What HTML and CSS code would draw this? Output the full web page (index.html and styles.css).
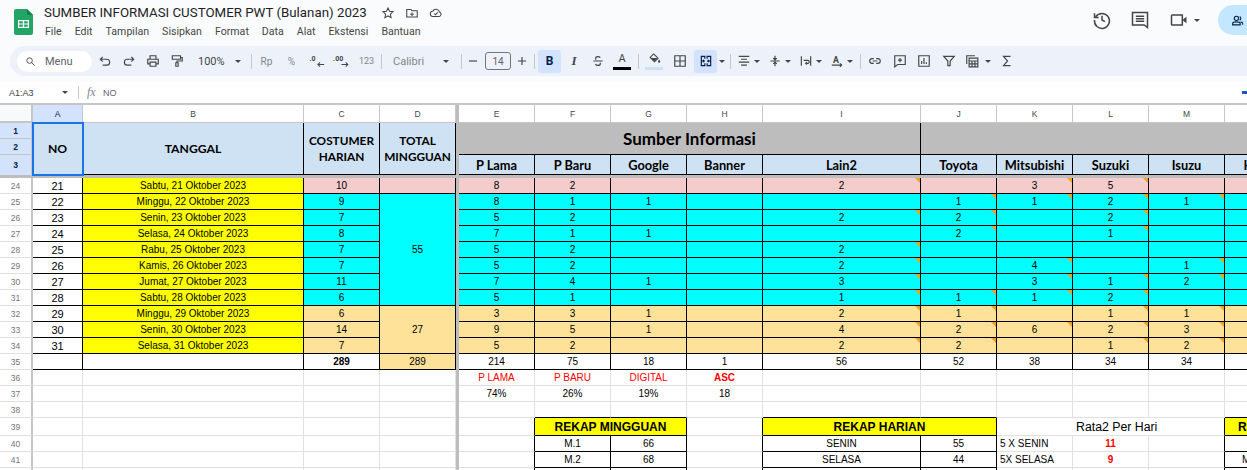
FILE: index.html
```html
<!DOCTYPE html>
<html lang="id">
<head>
<meta charset="utf-8">
<title>SUMBER INFORMASI CUSTOMER PWT (Bulanan) 2023</title>
<link rel="stylesheet" href="styles.css">
</head>
<body>
<header class="appbar">
  <svg class="logo" viewBox="0 0 19 26"><path fill="#23a566" d="M0 2a2 2 0 0 1 2-2h11l6 6v18a2 2 0 0 1-2 2H2a2 2 0 0 1-2-2z"/><path fill="#14804a" d="M13 0l6 6h-4a2 2 0 0 1-2-2z"/><path fill="#fff" d="M4 11h11v8H4z"/><path fill="#23a566" d="M5.200 12.200h3.700v2.200H5.200zM10.100 12.200h3.700v2.200h-3.700zM5.200 15.600h3.700v2.200H5.200zM10.100 15.600h3.700v2.200h-3.700z"/></svg>
  <div class="docinfo">
    <div class="titlerow">
      <span class="doctitle">SUMBER INFORMASI CUSTOMER PWT (Bulanan) 2023</span>
      <svg class="ic ti" viewBox="0 0 24 24"><path d="M12 3.500l2.600 5.600 6 .7-4.500 4.100 1.200 6L12 17l-5.300 3 1.200-6-4.500-4.200 6-.7z"/></svg>
      <svg class="ic ti" viewBox="0 0 24 24"><path d="M3 6h7l2 2h9v11H3zM12 11v6M9 14h6"/></svg>
      <svg class="ic ti" viewBox="0 0 24 24"><path d="M7 18a4.500 4.500 0 0 1-.5-9 6 6 0 0 1 11.300 1.200A4 4 0 0 1 17.500 18zM9 13l2 2 4-4"/></svg>
    </div>
    <nav class="menubar"><span>File</span><span>Edit</span><span>Tampilan</span><span>Sisipkan</span><span>Format</span><span>Data</span><span>Alat</span><span>Ekstensi</span><span>Bantuan</span></nav>
  </div>
  <div class="actions">
    <svg class="ic big" viewBox="0 0 24 24"><path d="M4.500 8A9 9 0 1 1 3 12M3 4v5h5M12 7v5l3.500 2"/></svg>
    <svg class="ic big" viewBox="0 0 24 24"><path d="M3 3h18v18l-4-3H3zM7 7.500h10M7 10.500h10M7 13.500h10"/></svg>
    <div class="meet">
      <svg class="ic big" viewBox="0 0 24 24"><path d="M3 7a1 1 0 0 1 1-1h12v12H4a1 1 0 0 1-1-1z"/><path class="solid" d="M17 11l4-3v8l-4-3z"/></svg>
      <i class="caret"></i>
    </div>
    <div class="share"><svg class="ic" viewBox="0 0 24 24"><circle cx="10" cy="8" r="4"/><path d="M3 20v-2c0-2 3-3.500 7-3.500s7 1.500 7 3.500v2zM16 4.500a4 4 0 0 1 0 7M18 14.500c2 .5 3.500 1.500 3.500 3v2.500"/></svg></div>
  </div>
</header>

<div class="toolbar">
  <div class="search"><svg class="ic" viewBox="0 0 24 24"><circle cx="10" cy="10" r="6"/><path d="M14.500 14.500L21 21"/></svg><span>Menu</span></div>
  <button class="tb ml1"><svg class="ic" viewBox="0 0 24 24"><path d="M8 5L4 9l4 4M4 9h11a5 5 0 0 1 0 10H8"/></svg></button>
  <button class="tb"><svg class="ic" viewBox="0 0 24 24"><path d="M16 5l4 4-4 4M20 9H9a5 5 0 0 0 0 10h7"/></svg></button>
  <button class="tb"><svg class="ic" viewBox="0 0 24 24"><path d="M7 8V3h10v5M6 17H3V9h18v8h-3M7 14h10v7H7z"/></svg></button>
  <button class="tb"><svg class="ic" viewBox="0 0 24 24"><path d="M4 3h14v6H4zM18 6h3v6h-9v3M10 15h4v6h-4z"/></svg></button>
  <div class="drop zoomsel"><span>100%</span><i class="caret"></i></div>
  <i class="sep ml6 mr2"></i>
  <button class="tb w25 dim">Rp</button>
  <button class="tb w25 dim">%</button>
  <button class="tb w25"><svg class="dec" viewBox="0 0 24 20"><text x="2" y="10">.0</text><path d="M23 15h-9M17 12l-3 3 3 3"/></svg></button>
  <button class="tb w25"><svg class="dec" viewBox="0 0 24 20"><text x="0" y="10">.00</text><path d="M12 15h9M18 12l3 3-3 3"/></svg></button>
  <button class="tb w25 dim small">123</button>
  <i class="sep ml2 mr2"></i>
  <div class="drop fontsel"><span>Calibri</span><i class="caret"></i></div>
  <i class="sep ml9"></i>
  <button class="tb w22"><svg class="ic" viewBox="0 0 24 24"><path d="M5 12h14"/></svg></button>
  <div class="sizebox ml1">14</div>
  <button class="tb w22"><svg class="ic" viewBox="0 0 24 24"><path d="M5 12h14M12 5v14"/></svg></button>
  <i class="sep ml1"></i>
  <button class="tb w23 on ml3 bold">B</button>
  <button class="tb ml1 ital">I</button>
  <button class="tb"><svg class="ic" viewBox="0 0 24 24"><path d="M16 6.500C15 5 13.500 4.500 12 4.500c-2.500 0-4 1.300-4 3 0 .8.300 1.500 1 2M4 12h16M15.500 15c.3.500.5 1 .5 1.500 0 1.800-1.700 3-4 3-2 0-3.500-.8-4.500-2.200"/></svg></button>
  <button class="tb colorbtn"><span class="lettera">A</span><i class="bar black"></i></button>
  <i class="sep ml4"></i>
  <button class="tb ml3 colorbtn"><svg class="ic fillic" viewBox="0 0 24 24"><path d="M10 3l8.500 8.500-6.500 6.500-8-8 6-6"/><path class="solid" d="M5 11h12l-5 6z"/><path class="solid" d="M20.500 14s2 2.500 2 4a2 2 0 0 1-4 0c0-1.500 2-4 2-4z"/></svg><i class="bar pale"></i></button>
  <button class="tb ml2"><svg class="ic" viewBox="0 0 24 24"><path d="M3 3h18v18H3zM12 3v18M3 12h18"/></svg></button>
  <button class="tb w23 on ml2"><svg class="ic navy" viewBox="0 0 24 24"><path d="M10 8V4H4v16h6v-4M14 8V4h6v16h-6v-4M3 12h6M7 10l2 2-2 2M21 12h-6M17 10l-2 2 2 2"/></svg></button>
  <i class="caret cw10"></i>
  <i class="sep ml3"></i>
  <div class="grp ml3"><svg class="ic" viewBox="0 0 24 24"><path d="M3 4h18M7 9h10M3 14h18M7 19h10"/></svg><i class="caret"></i></div>
  <div class="grp ml4"><svg class="ic" viewBox="0 0 24 24"><path d="M12 3v6M9 7l3 3 3-3M4 12h16M12 21v-6M9 17l3-3 3 3"/></svg><i class="caret"></i></div>
  <div class="grp ml4"><svg class="ic" viewBox="0 0 24 24"><path d="M4 4v16M20 4v16M8 11h7a2.500 2.500 0 0 1 0 5h-3M13.500 14l-2 2 2 2"/></svg><i class="caret"></i></div>
  <div class="grp ml4"><svg class="ic" viewBox="0 0 24 24"><text x="5" y="15" class="icontext">A</text><path d="M3 19h16M17 16l3 3-3 3"/></svg><i class="caret"></i></div>
  <i class="sep ml6"></i>
  <button class="tb ml2"><svg class="ic" viewBox="0 0 24 24"><path d="M10 8H7a4 4 0 0 0 0 8h3M14 8h3a4 4 0 0 1 0 8h-3M8 12h8"/></svg></button>
  <button class="tb ml1"><svg class="ic" viewBox="0 0 24 24"><path d="M3 3h18v15H8l-5 4zM12 7v7M8.500 10.500h7"/></svg></button>
  <button class="tb"><svg class="ic" viewBox="0 0 24 24"><path d="M3 3h18v18H3zM8 17v-5M12 17V7M16 17v-3"/></svg></button>
  <button class="tb ml1"><svg class="ic" viewBox="0 0 24 24"><path d="M3 4h18l-7 8v8h-4v-8z"/></svg></button>
  <div class="grp ml1"><svg class="ic" viewBox="0 0 24 24"><path d="M3 17V3h14M7 7h15v15H7zM7 12h15M7 17h15M12 12v10M17 12v10"/></svg><i class="caret cgap"></i></div>
  <button class="tb ml4"><svg class="ic" viewBox="0 0 24 24"><path d="M18 4H6l7 8-7 8h12"/></svg></button>
</div>

<div class="formulabar">
  <span class="namebox">A1:A3</span><i class="caret"></i><i class="sep"></i>
  <span class="fx">fx</span><span class="fval">NO</span>
  <i class="fmark"></i>
</div>

<main class="sheet">
<table class="grid">
<colgroup><col class="c-rh"><col class="c-a"><col class="c-b"><col class="c-n"><col class="c-n"><col class="c-fz"><col class="c-n"><col class="c-n"><col class="c-n"><col class="c-n"><col class="c-i"><col class="c-n"><col class="c-n"><col class="c-n"><col class="c-n"><col class="c-n"></colgroup>
<tr class="colhead"><td class="corner"></td><td class="selhead">A</td><td>B</td><td>C</td><td>D</td><td class="fz"></td><td>E</td><td>F</td><td>G</td><td>H</td><td>I</td><td>J</td><td>K</td><td>L</td><td>M</td><td>N</td></tr>
<tr class="r16"><td class="rh selrow">1</td><td rowspan="3" class="hd sel">NO</td><td rowspan="3" class="hd">TANGGAL</td><td rowspan="3" class="hd two">COSTUMER<br>HARIAN</td><td rowspan="3" class="hd two">TOTAL<br>MINGGUAN</td><td rowspan="3" class="fz"></td><td colspan="5" rowspan="2" class="hd gr">Sumber Informasi</td><td colspan="5" rowspan="2" class="hd gr"></td></tr>
<tr class="r16"><td class="rh selrow">2</td></tr>
<tr class="r20"><td class="rh selrow">3</td><td class="hd sub">P Lama</td><td class="hd sub">P Baru</td><td class="hd sub">Google</td><td class="hd sub">Banner</td><td class="hd sub">Lain2</td><td class="hd sub">Toyota</td><td class="hd sub">Mitsubishi</td><td class="hd sub">Suzuki</td><td class="hd sub">Isuzu</td><td class="hd sub">Honda</td></tr>
<tr class="freeze"><td colspan="16"></td></tr>

<tr class="d pink"><td class="rh">24</td><td class="no">21</td><td class="ye">Sabtu, 21 Oktober 2023</td><td>10</td><td></td><td class="fz"></td><td>8</td><td>2</td><td></td><td></td><td class="nt">2</td><td></td><td class="nt">3</td><td class="nt">5</td><td></td><td></td></tr>
<tr class="d cy"><td class="rh">25</td><td class="no">22</td><td class="ye">Minggu, 22 Oktober 2023</td><td>9</td><td rowspan="7">55</td><td class="fz"></td><td>8</td><td>1</td><td>1</td><td></td><td></td><td class="nt">1</td><td class="nt">1</td><td class="nt">2</td><td class="nt">1</td><td></td></tr>
<tr class="d cy"><td class="rh">26</td><td class="no">23</td><td class="ye">Senin, 23 Oktober 2023</td><td>7</td><td class="fz"></td><td>5</td><td>2</td><td></td><td></td><td class="nt">2</td><td class="nt">2</td><td></td><td class="nt">2</td><td></td><td></td></tr>
<tr class="d cy"><td class="rh">27</td><td class="no">24</td><td class="ye">Selasa, 24 Oktober 2023</td><td>8</td><td class="fz"></td><td>7</td><td>1</td><td>1</td><td></td><td></td><td class="nt">2</td><td></td><td class="nt">1</td><td></td><td></td></tr>
<tr class="d cy"><td class="rh">28</td><td class="no">25</td><td class="ye">Rabu, 25 Oktober 2023</td><td>7</td><td class="fz"></td><td>5</td><td>2</td><td></td><td></td><td class="nt">2</td><td></td><td></td><td></td><td></td><td></td></tr>
<tr class="d cy"><td class="rh">29</td><td class="no">26</td><td class="ye">Kamis, 26 Oktober 2023</td><td>7</td><td class="fz"></td><td>5</td><td>2</td><td></td><td></td><td class="nt">2</td><td></td><td class="nt">4</td><td></td><td class="nt">1</td><td></td></tr>
<tr class="d cy"><td class="rh">30</td><td class="no">27</td><td class="ye">Jumat, 27 Oktober 2023</td><td>11</td><td class="fz"></td><td>7</td><td>4</td><td>1</td><td></td><td class="nt">3</td><td></td><td class="nt">3</td><td class="nt">1</td><td class="nt">2</td><td></td></tr>
<tr class="d cy"><td class="rh">31</td><td class="no">28</td><td class="ye">Sabtu, 28 Oktober 2023</td><td>6</td><td class="fz"></td><td>5</td><td>1</td><td></td><td></td><td class="nt">1</td><td class="nt">1</td><td class="nt">1</td><td class="nt">2</td><td></td><td></td></tr>
<tr class="d tan"><td class="rh">32</td><td class="no">29</td><td class="ye">Minggu, 29 Oktober 2023</td><td>6</td><td rowspan="3">27</td><td class="fz"></td><td>3</td><td>3</td><td>1</td><td></td><td class="nt">2</td><td class="nt">1</td><td></td><td class="nt">1</td><td class="nt">1</td><td></td></tr>
<tr class="d tan"><td class="rh">33</td><td class="no">30</td><td class="ye">Senin, 30 Oktober 2023</td><td>14</td><td class="fz"></td><td>9</td><td>5</td><td>1</td><td></td><td class="nt">4</td><td class="nt">2</td><td class="nt">6</td><td class="nt">2</td><td class="nt">3</td><td></td></tr>
<tr class="d tan"><td class="rh">34</td><td class="no">31</td><td class="ye">Selasa, 31 Oktober 2023</td><td>7</td><td class="fz"></td><td>5</td><td>2</td><td></td><td></td><td class="nt">2</td><td class="nt">2</td><td></td><td class="nt">1</td><td class="nt">2</td><td></td></tr>
<tr class="d"><td class="rh">35</td><td></td><td></td><td class="strong">289</td><td class="tanc">289</td><td class="fz"></td><td>214</td><td>75</td><td>18</td><td>1</td><td>56</td><td>52</td><td>38</td><td>34</td><td>34</td><td></td></tr>

<tr class="p"><td class="rh">36</td><td></td><td></td><td></td><td></td><td class="fz"></td><td class="red">P LAMA</td><td class="red">P BARU</td><td class="red">DIGITAL</td><td class="red strong">ASC</td><td></td><td></td><td></td><td></td><td></td><td></td></tr>
<tr class="p"><td class="rh">37</td><td></td><td></td><td></td><td></td><td class="fz"></td><td>74%</td><td>26%</td><td>19%</td><td>18</td><td></td><td></td><td></td><td></td><td></td><td></td></tr>
<tr class="p"><td class="rh">38</td><td></td><td></td><td></td><td></td><td class="fz"></td><td></td><td class="kb"></td><td class="kb"></td><td></td><td class="kb"></td><td class="kb"></td><td></td><td></td><td></td><td class="kb"></td></tr>
<tr class="p r18"><td class="rh">39</td><td></td><td></td><td></td><td></td><td class="fz"></td><td class="kr"></td><td colspan="2" class="box ttl">REKAP MINGGUAN</td><td class="kr"></td><td colspan="2" class="box ttl">REKAP HARIAN</td><td colspan="3" class="rata kr">Rata2 Per Hari</td><td class="box ttl lft">REKAP</td></tr>
<tr class="p"><td class="rh">40</td><td></td><td></td><td></td><td></td><td class="fz"></td><td class="kr"></td><td class="box">M.1</td><td class="box">66</td><td class="kr"></td><td class="box">SENIN</td><td class="box">55</td><td class="lbl">5 X SENIN</td><td class="red strong">11</td><td class="kr"></td><td class="box"></td></tr>
<tr class="p"><td class="rh">41</td><td></td><td></td><td></td><td></td><td class="fz"></td><td class="kr"></td><td class="box">M.2</td><td class="box">68</td><td class="kr"></td><td class="box">SELASA</td><td class="box">44</td><td class="lbl">5X SELASA</td><td class="red strong">9</td><td class="kr"></td><td class="box">MINGGU</td></tr>
<tr class="p"><td class="rh">42</td><td></td><td></td><td></td><td></td><td class="fz"></td><td class="kr"></td><td class="box"></td><td class="box"></td><td class="kr"></td><td class="box"></td><td class="box"></td><td></td><td></td><td class="kr"></td><td class="box"></td></tr>
</table>
</main>
</body>
</html>
```
FILE: styles.css
```css
* { box-sizing: border-box; }
html, body { margin: 0; height: 470px; overflow: hidden; }
body { background: #f9fbfd; font-family: "Liberation Sans", Arial, sans-serif; color: #000; }

.ic { width: 14px; height: 14px; fill: none; stroke: #444746; stroke-width: 2; flex: none; display: block; }
.ic .solid, .solid { fill: #444746; stroke: none; }
.caret { display: block; width: 0; height: 0; border-left: 3px solid transparent; border-right: 3px solid transparent; border-top: 3px solid #444746; flex: none; }

.appbar { height: 46px; display: flex; padding-left: 14px; }
.logo { width: 19px; height: 26px; margin-top: 9px; flex: none; }
.docinfo { margin-left: 11px; padding-top: 3px; }
.titlerow { display: flex; align-items: center; height: 19px; }
.doctitle { font: 13.300px Roboto, sans-serif; color: #1f1f1f; width: 337px; white-space: nowrap; letter-spacing: 0; }
.ti { width: 14px; height: 14px; margin-right: 10px; stroke-width: 1.800; }
.menubar { display: flex; gap: 13px; margin-top: 1px; margin-left: 1px; font: 10.600px Roboto, sans-serif; color: #444746; height: 16px; align-items: center; }
.actions { margin-left: auto; display: flex; align-items: center; height: 40px; }
.big { width: 20px; height: 20px; stroke-width: 1.800; margin-right: 18px; }
.meet { display: flex; align-items: center; margin-left: 1px; margin-right: 18px; }
.meet .big { margin-right: 5px; }
.share { width: 29px; height: 30px; background: #c2e7ff; border-radius: 15px 0 0 15px; display: flex; align-items: center; padding-left: 13px; }
.share .ic { stroke: #041e49; width: 13px; height: 13px; }

.toolbar { height: 30px; margin-left: 10px; background: #edf2fa; border-radius: 15px 0 0 15px; display: flex; align-items: center; font: 11px Roboto, sans-serif; color: #444746; }
.search { width: 75px; height: 21px; margin-left: 7px; background: #fff; border-radius: 11px; display: flex; align-items: center; padding-left: 8px; gap: 9px; color: #5f6368; }
.search .ic { width: 11px; height: 11px; }
.tb { width: 24px; height: 23px; padding: 0; border: 0; border-radius: 3px; background: none; font: inherit; color: inherit; display: flex; flex-direction: column; align-items: center; justify-content: center; flex: none; }
.w25 { width: 25px; }
.w22 { width: 22px; }
.w23 { width: 23px; }
.on { background: #d3e3fd; }
.dim { color: #80868b; font-size: 10px; }
.small { font-size: 9px; }
.bold { font-weight: 700; font-size: 12px; color: #041e49; }
.ital { font: italic 700 13px "Liberation Serif", serif; color: #444746; }
.navy { stroke: #041e49; }
.sep { display: block; width: 1px; height: 15px; background: #c7c7c7; flex: none; }
.ml1 { margin-left: 1px; } .ml2 { margin-left: 2px; } .ml3 { margin-left: 3px; } .ml4 { margin-left: 4px; } .ml6 { margin-left: 6px; } .ml9 { margin-left: 9px; } .mr2 { margin-right: 2px; }
.drop { display: flex; align-items: center; justify-content: space-between; flex: none; }
.zoomsel { width: 56px; padding: 0 4px 0 9px; }
.fontsel { width: 68px; padding: 0 3px 0 9px; color: #80868b; }
.sizebox { width: 26px; height: 18px; border: 1px solid #747775; border-radius: 3px; display: flex; align-items: center; justify-content: center; font-size: 10px; color: #5f6368; flex: none; }
.dec { width: 17px; height: 14px; fill: #444746; stroke: #444746; stroke-width: 1.500; }
.dec text { font: 700 10px Roboto, sans-serif; stroke: none; }
.dec path { fill: none; }
.colorbtn { position: relative; }
.lettera { font-size: 11px; line-height: 12px; margin-top: -4px; }
.bar { position: absolute; left: 3px; right: 3px; bottom: 3px; height: 3px; }
.black { background: #000; }
.pale { background: #cfe2f3; }
.fillic { margin-top: -6px; width: 13px; height: 13px; }
.cw10 { margin: 0 2px; }
.grp { display: flex; align-items: center; width: 27px; padding-left: 3px; flex: none; gap: 3px; }
.icontext { font: 700 15px Roboto, sans-serif; fill: #444746; stroke: none; }
.cgap { margin-left: 3px; }
.grp:has(.cgap) { width: 29px; }

.formulabar { margin-top: 6px; height: 23px; background: #fff; border-bottom: 2px solid #c4c7c5; display: flex; align-items: center; padding-left: 9px; position: relative; font-size: 9px; color: #3c4043; }
.namebox { width: 53px; }
.formulabar .sep { margin-left: 10px; height: 13px; }
.fx { font: italic 12px "Liberation Serif", serif; color: #80868b; margin-left: 8px; width: 16px; }
.fval { color: #5f6368; }
.fmark { width: 5px; height: 3px; background: #1a56c4; position: absolute; right: 0; top: 9px; }

.sheet { height: 365px; overflow: hidden; background: #fff; }
.grid { width: 1301px; table-layout: fixed; border-collapse: separate; border-spacing: 0; font-size: 10px; }
.c-rh { width: 33px; } .c-a { width: 50px; } .c-b { width: 221px; } .c-n { width: 76px; } .c-fz { width: 3px; } .c-i { width: 158px; }
.grid td { padding: 0; height: 16px; line-height: 14px; text-align: center; white-space: nowrap; overflow: hidden; border-right: 1px solid #e0e0e0; border-bottom: 1px solid #e0e0e0; }
.grid td.fz { background: #bdbdbd; border: 0; }

.colhead td { height: 18px; font-size: 8.500px; color: #444746; border-right-color: #c7c7c7; border-bottom-color: #c4c7c5; }
.grid td.corner { background: #f8f9fa; border-right: 2px solid #c4c7c5; border-bottom: 2px solid #c4c7c5; }
.grid .selhead { background: #d3e3fd; }
.colhead .selhead { color: #041e49; }

.grid td.rh { font-size: 8.500px; color: #70757a; background: #fff; border-right: 2px solid #c4c7c5; border-bottom: 1px solid #e0e0e0; }
.grid td.selrow { background: #d3e3fd; color: #041e49; font-weight: 700; border-bottom-color: #c4c7c5; }
.r16 td { height: 16px; }
.r20 td { height: 20px; }
.grid .r20 td.rh { border-bottom: 0; }
.r18 td { height: 18px; }

.grid td.hd { background: #cfe2f3; font: 700 12.200px Lato, sans-serif; border-right-color: #000; border-bottom-color: #000; line-height: 16px; }
.grid td.two { font-size: 11.800px; }
.grid td.gr { background: #bdbdbd; font-size: 17px; }
.grid td.sub { font-size: 12.800px; }
.grid td.sel { outline: 2px solid #1a73e8; outline-offset: -1px; position: relative; z-index: 1; }
.grid .freeze td { height: 3px; background: #bdbdbd; border: 0; line-height: 0; font-size: 0; }

.d td { border-right-color: #000; border-bottom-color: #000; }
.pink td { background: #f4cccc; }
.cy td { background: #00ffff; }
.tan td { background: #ffe29a; }
.grid td.rh { background: #fff; }
.grid td.selrow { background: #d3e3fd; }
.grid td.no { background: #fff; font-size: 11px; }
.grid td.ye { background: #ffff00; }
.grid td.tanc { background: #ffe29a; }
.strong { font-weight: 700; }
.grid td.nt { position: relative; }
.grid td.nt::after { content: ""; position: absolute; top: 0; right: 0; border-top: 5px solid #f9a01b; border-left: 5px solid transparent; }

.grid td.red { color: #ff0000; font-size: 10px; }
.grid td.kb { border-bottom-color: #000; }
.grid td.kr { border-right-color: #000; }
.grid td.box { border-right-color: #000; border-bottom-color: #000; }
.grid td.ttl { background: #ffff00; font-weight: 700; font-size: 12px; line-height: 16px; }
.grid td.lft { text-align: left; padding-left: 13px; }
.grid td.rata { font-size: 12.300px; padding-left: 79px; text-align: left; }
.grid td.lbl { text-align: left; padding-left: 3px; }
```
